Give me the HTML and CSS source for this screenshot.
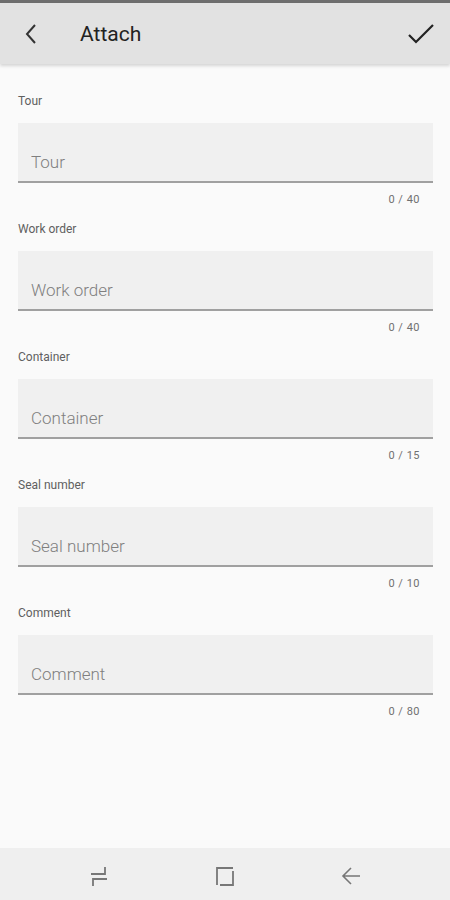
FILE: index.html
```html
<!DOCTYPE html>
<html lang="en">
<head>
    <meta charset="UTF-8">
    <meta name="viewport" content="width=device-width, initial-scale=1.0">
    <title>Attach</title>
    <link rel="stylesheet" href="styles.css">
</head>
<body>
    <div class="status"></div>

    <!-- Toolbar -->
    <header class="toolbar">
        <button class="tool-btn" aria-label="Back">
            <svg width="24" height="24" viewBox="0 0 24 24"><path d="M15 3 L7 12 L15 21" fill="none" stroke="#333" stroke-width="2"/></svg>
        </button>
        <h1 class="title">Attach</h1>
        <button class="tool-btn done" aria-label="Save">
            <svg width="26" height="24" viewBox="0 0 26 24"><path d="M1 13 L8 20 L25 3" fill="none" stroke="#222" stroke-width="2.2"/></svg>
        </button>
    </header>

    <!-- Form fields -->
    <main class="form">
        <div class="field">
            <label class="field-label" for="tour">Tour</label>
            <input class="field-input" id="tour" placeholder="Tour" maxlength="40">
            <div class="counter">0 / 40</div>
        </div>
        <div class="field">
            <label class="field-label" for="work_order">Work order</label>
            <input class="field-input" id="work_order" placeholder="Work order" maxlength="40">
            <div class="counter">0 / 40</div>
        </div>
        <div class="field">
            <label class="field-label" for="container">Container</label>
            <input class="field-input" id="container" placeholder="Container" maxlength="15">
            <div class="counter">0 / 15</div>
        </div>
        <div class="field">
            <label class="field-label" for="seal">Seal number</label>
            <input class="field-input" id="seal" placeholder="Seal number" maxlength="10">
            <div class="counter">0 / 10</div>
        </div>
        <div class="field">
            <label class="field-label" for="comment">Comment</label>
            <input class="field-input" id="comment" placeholder="Comment" maxlength="80">
            <div class="counter">0 / 80</div>
        </div>
    </main>

    <!-- System navigation -->
    <nav class="navbar">
        <svg width="20" height="22" viewBox="0 0 20 22"><path d="M2 9 H16 V2 M18 14 H4 V21" fill="none" stroke="#777" stroke-width="1.8"/></svg>
        <svg width="20" height="22" viewBox="0 0 20 22"><path d="M2 20 V3 H18 M18 6 V20 H5" fill="none" stroke="#777" stroke-width="1.8"/></svg>
        <svg width="20" height="22" viewBox="0 0 20 22"><path d="M19 11 H3 M10 3 L2 11 L10 19" fill="none" stroke="#777" stroke-width="1.6"/></svg>
    </nav>
</body>
</html>
```

FILE: styles.css
```css
html, body {
    margin: 0;
    height: 100%;
}
body {
    display: flex;
    flex-direction: column;
    background: #fafafa;
    font-family: Roboto, "Noto Sans", Arial, sans-serif;
    color: #212121;
}
.status {
    height: 3px;
    background: #6e6e6e;
}
.toolbar {
    display: flex;
    align-items: center;
    height: 61px;
    padding: 0 16px 0 19px;
    background: #e2e2e2;
    box-shadow: 0 2px 3px rgba(0, 0, 0, 0.15);
    position: relative;
}
.tool-btn {
    display: flex;
    align-items: center;
    justify-content: center;
    width: 26px;
    height: 26px;
    padding: 0;
    border: none;
    background: none;
}
.title {
    flex: 1;
    margin: 0 0 0 35px;
    font-size: 21px;
    font-weight: 400;
    color: #222;
}
.form {
    flex: 1;
    padding: 29px 17px 0 18px;
}
.field {
    display: flex;
    flex-direction: column;
    margin-bottom: 14px;
}
.field-label {
    font-size: 12px;
    line-height: 16px;
    color: #5f5f5f;
    margin-bottom: 14px;
}
.field-input {
    box-sizing: border-box;
    height: 60px;
    padding: 27px 13px 7px;
    border: none;
    border-bottom: 2px solid #a0a0a0;
    background: #f0f0f0;
    font-family: inherit;
    font-size: 17px;
    font-weight: 300;
    line-height: 24px;
    color: #212121;
    outline: none;
}
.field-input::placeholder {
    color: #7f7f7f;
}
.counter {
    align-self: flex-end;
    margin: 10px 13px 0 0;
    font-size: 11px;
    line-height: 14px;
    letter-spacing: 0.5px;
    color: #707070;
}
.navbar {
    display: flex;
    justify-content: center;
    align-items: center;
    gap: 106px;
    height: 52px;
    padding-top: 4px;
    box-sizing: border-box;
    background: #efefef;
}
```
